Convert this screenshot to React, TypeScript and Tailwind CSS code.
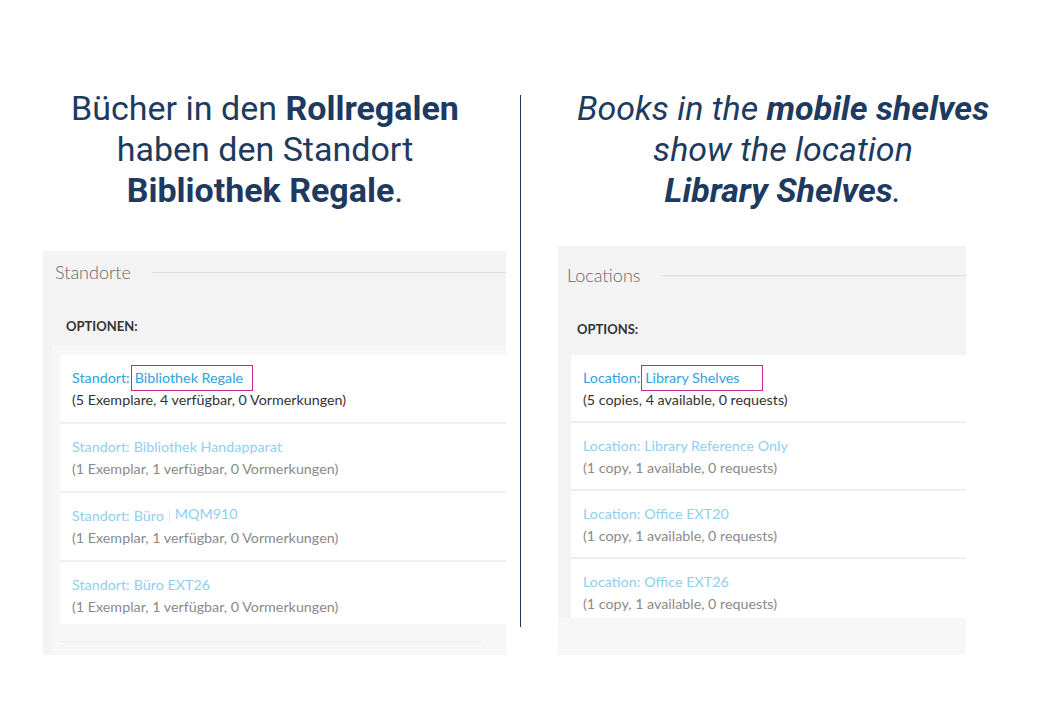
type Row = {
  label: string;
  value: string;
  note: string;
  tag?: string;
};

const german: Row[] = [
  { label: "Standort:", value: "Bibliothek Regale", note: "(5 Exemplare, 4 verfügbar, 0 Vormerkungen)" },
  { label: "Standort:", value: "Bibliothek Handapparat", note: "(1 Exemplar, 1 verfügbar, 0 Vormerkungen)" },
  { label: "Standort:", value: "Büro", tag: "MQM910", note: "(1 Exemplar, 1 verfügbar, 0 Vormerkungen)" },
  { label: "Standort:", value: "Büro EXT26", note: "(1 Exemplar, 1 verfügbar, 0 Vormerkungen)" },
];

const english: Row[] = [
  { label: "Location:", value: "Library Shelves", note: "(5 copies, 4 available, 0 requests)" },
  { label: "Location:", value: "Library Reference Only", note: "(1 copy, 1 available, 0 requests)" },
  { label: "Location:", value: "Office EXT20", note: "(1 copy, 1 available, 0 requests)" },
  { label: "Location:", value: "Office EXT26", note: "(1 copy, 1 available, 0 requests)" },
];

const panelFont = { fontFamily: "Lato, 'Open Sans', sans-serif" };

function Entry({ row, first, last, tall }: { row: Row; first: boolean; last: boolean; tall: boolean }) {
  const height = last ? (tall ? "h-[62px]" : "h-[59px]") : tall ? "h-[69px] border-b-2" : "h-[68px] border-b-2";
  return (
    <div className={`${height} border-[#efefef] bg-white px-3 pt-[12px] text-[14.3px] leading-[22px]`}>
      <div className={`flex items-center ${first ? "text-[#2ea3e0]" : "text-[#8fcff0]"}`}>
        <span>{row.label}</span>
        {first ? (
          <span className="-my-[2px] ml-[1px] flex h-[26px] w-[122px] items-center border border-[#c7268d] pl-[3px]">
            {row.value}
          </span>
        ) : (
          <span className="ml-[4px]">{row.value}</span>
        )}
        {row.tag && (
          <>
            <span className="ml-[5px] mr-[5px] h-[12px] w-px bg-[#e6e6e6]" />
            <span className="-mt-[4px]">{row.tag}</span>
          </>
        )}
      </div>
      <div className={first ? "text-[#333]" : "text-[#8a8a8a]"}>{row.note}</div>
    </div>
  );
}

function Panel({
  title,
  options,
  rows,
  variant,
}: {
  title: string;
  options: string;
  rows: Row[];
  variant: "de" | "en";
}) {
  const de = variant === "de";
  return (
    <div
      className={`flex flex-col bg-[#f3f3f3] ${de ? "mt-[40px] h-[404px]" : "mt-[35px] h-[409px]"}`}
      style={panelFont}
    >
      <div className={`flex items-center ${de ? "pl-[12px] pt-[10px]" : "pl-[9px] pt-[18px]"}`}>
        <span className="text-[18px] font-light leading-[22px] text-[#666]">{title}</span>
        <span className={`h-px flex-1 bg-[#dedede] ${de ? "ml-[21px]" : "ml-[22px]"}`} />
      </div>
      <div
        className={`text-[13px] font-bold leading-[18px] text-[#333] ${de ? "mt-[34px] pl-[23px]" : "mt-[34px] pl-[19px]"}`}
      >
        {options}
      </div>
      {de ? (
        <div className="ml-[9px] mt-[11px] flex-1 bg-[#f7f7f7] pl-[8px] pt-[9px]">
          {rows.map((row, i) => (
            <Entry key={row.value} row={row} first={i === 0} last={i === rows.length - 1} tall />
          ))}
          <div className="mt-[17px] h-px w-[422px] bg-[#ececec]" />
        </div>
      ) : (
        <div className="mt-[17px] flex flex-1 flex-col">
          <div className="pl-[13px]">
            {rows.map((row, i) => (
              <Entry key={row.value} row={row} first={i === 0} last={i === rows.length - 1} tall={false} />
            ))}
          </div>
          <div className="flex-1 bg-[#f7f7f7]" />
        </div>
      )}
    </div>
  );
}

export default function App() {
  return (
    <div className="h-[720px] w-[1040px] bg-white" style={{ fontFamily: "Roboto, 'Open Sans', sans-serif" }}>
      <div className="flex items-start">
        <div className="ml-[43px] flex w-[463px] flex-col pt-[88px]">
          <h1 className="-ml-[18px] w-[480px] text-center text-[34px] font-normal leading-[41px] text-[#1e3a5f]">
            Bücher in den <b className="font-bold">Rollregalen</b>
            <br />
            haben den Standort
            <br />
            <b className="font-bold">Bibliothek Regale</b>.
          </h1>
          <Panel title="Standorte" options="OPTIONEN:" rows={german} variant="de" />
        </div>
        <div className="ml-[14px] mt-[95px] h-[532px] w-px bg-[#1e3a5f]" />
        <div className="ml-[37px] flex w-[408px] flex-col pt-[88px]">
          <h1 className="-ml-[15px] w-[480px] text-center text-[34px] font-normal italic leading-[41px] text-[#1e3a5f]">
            Books in the <b className="font-bold">mobile shelves</b>
            <br />
            show the location
            <br />
            <b className="font-bold">Library Shelves</b>.
          </h1>
          <Panel title="Locations" options="OPTIONS:" rows={english} variant="en" />
        </div>
      </div>
    </div>
  );
}
